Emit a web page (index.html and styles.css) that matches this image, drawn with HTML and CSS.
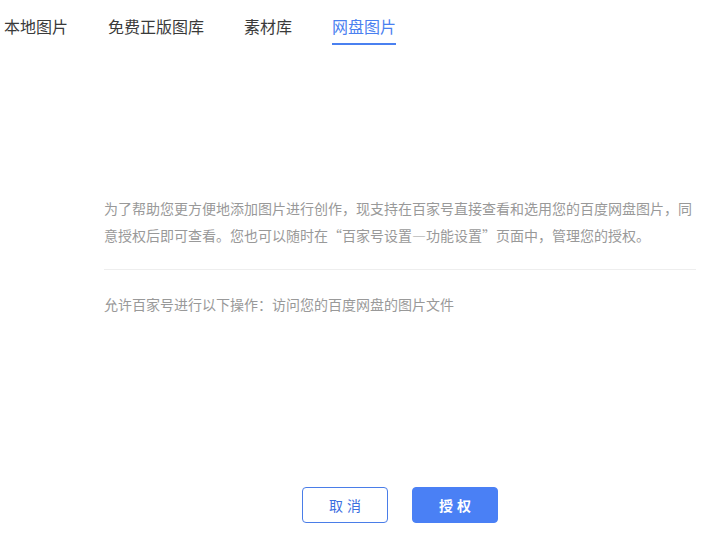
FILE: index.html
```html
<!DOCTYPE html>
<html lang="zh-CN">
<head>
<meta charset="utf-8">
<link rel="stylesheet" href="styles.css">
</head>
<body>
<div class="tabs">
  <div class="tab">本地图片</div>
  <div class="tab">免费正版图库</div>
  <div class="tab">素材库</div>
  <div class="tab active">网盘图片</div>
</div>
<div class="content">
  <p class="intro">为了帮助您更方便地添加图片进行创作，现支持在百家号直接查看和选用您的百度网盘图片，同意授权后即可查看。您也可以随时在“百家号设置—功能设置”页面中，管理您的授权。</p>
  <div class="divider"></div>
  <p class="perm">允许百家号进行以下操作：访问您的百度网盘的图片文件</p>
  <div class="actions">
    <button class="btn btn-cancel">取消</button>
    <button class="btn btn-ok">授权</button>
  </div>
</div>
</body>
</html>
```

FILE: styles.css
```css
html, body {
  margin: 0;
  padding: 0;
  background: #ffffff;
  font-family: "Microsoft YaHei", "Noto Sans CJK SC", "Noto Sans", sans-serif;
}
.tabs {
  display: flex;
  gap: 40px;
  padding-left: 4px;
}
.tab {
  font-size: 16px;
  line-height: 24px;
  padding-top: 14px;
  padding-bottom: 5px;
  border-bottom: 2px solid transparent;
  color: #3a3a3a;
}
.tab.active {
  color: #4a80f0;
  border-bottom-color: #4a80f0;
}
.content {
  margin-left: 104px;
  width: 592px;
  padding-top: 150px;
}
.intro {
  margin: 0;
  width: 590px;
  font-size: 14px;
  line-height: 27px;
  color: #999999;
}
.divider {
  height: 1px;
  background: #eeeeee;
  margin-top: 20px;
}
.perm {
  margin: 21px 0 0 0;
  font-size: 14px;
  line-height: 27px;
  color: #999999;
}
.actions {
  display: flex;
  justify-content: center;
  gap: 24px;
  margin-top: 169px;
}
.btn {
  width: 86px;
  height: 36px;
  border-radius: 4px;
  font-family: inherit;
  font-size: 14px;
  letter-spacing: 4px;
  text-indent: 4px;
  padding: 0;
  cursor: pointer;
}
.btn-cancel {
  background: #ffffff;
  border: 1px solid #4a7de8;
  color: #3c6fdf;
}
.btn-ok {
  background: #4a80f5;
  border: 1px solid #4a80f5;
  color: #ffffff;
  font-weight: bold;
}
```
